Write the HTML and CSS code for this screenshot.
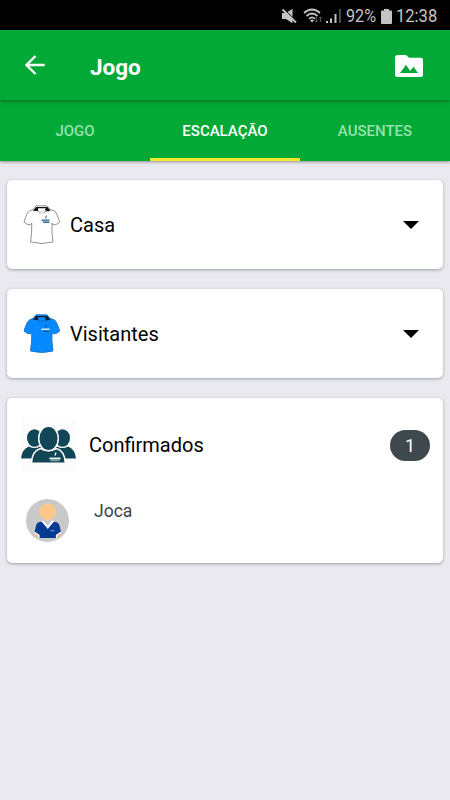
FILE: index.html
```html
<!DOCTYPE html>
<html lang="pt-BR">
<head>
<meta charset="utf-8">
<title>Jogo</title>
<link rel="stylesheet" href="styles.css">
</head>
<body>
<div class="status">
  <svg class="mute" width="16" height="16" viewBox="0 0 16 16"><path d="M1 5h4L11.500.8v14.400L5 11H1z" fill="#c4c4c4"/><path d="M2.500 1L16 14" stroke="#000" stroke-width="1.200"/><path d="M1.500 1.500L15 14.500" stroke="#c4c4c4" stroke-width="1.900"/></svg>
  <svg class="wifi" width="20" height="16" viewBox="0 0 20 16"><g fill="none" stroke="#c4c4c4" stroke-width="1.700"><path d="M1 5Q9 -2 17 5M3.500 8Q9 3 14.500 8M6 10.800Q9 8 12 10.800"/></g><path d="M7 12.300Q9 10.800 11 12.300L9 14.500z" fill="#c4c4c4"/><path d="M13.500 9v5m-1.500-1.500l1.500 1.700 1.500-1.700M17.500 14V9m-1.500 1.500l1.500-1.700L19 10.500" fill="none" stroke="#555"/></svg>
  <svg class="signal" width="16" height="16" viewBox="0 0 16 16"><path d="M0 13h2v2H0zM4 10.500h2V15H4zM8.500 6h2v9h-2z" fill="#c4c4c4"/><path d="M13 1h2v14h-2z" fill="#484848"/></svg>
  <span class="percent">92%</span>
  <svg class="battery" width="11" height="15" viewBox="0 0 11 15"><path d="M3 0h5v1.500h2q1 0 1 1V14q0 1-1 1H1q-1 0-1-1V2.500q0-1 1-1h2z" fill="#c4c4c4"/></svg>
  <span class="clock">12:38</span>
</div>
<header class="bar">
  <svg class="back" width="20" height="20" viewBox="0 0 20 20"><path d="M19.700 10H2M10.500 1L1.500 10l9 9" fill="none" stroke="#fff" stroke-width="2.300"/></svg>
  <h1>Jogo</h1>
  <svg class="folder" width="28" height="23" viewBox="0 0 28 23"><path fill="#fff" fill-rule="evenodd" d="M2.500 0H11l3 2.800h11.500Q28 2.800 28 5.300v14.200q0 2.500-2.500 2.500h-23Q0 22 0 19.500v-17Q0 0 2.500 0zM5 18h18l-4.500-6.300-3.300 4.200L11 9.800z"/></svg>
</header>
<nav class="tabs">
  <div class="tab"><span>JOGO</span></div>
  <div class="tab active"><span>ESCALAÇÃO</span></div>
  <div class="tab"><span>AUSENTES</span></div>
</nav>
<main>
  <section class="card team">
    <svg class="shirt" width="38" height="40" viewBox="0 0 38 40"><path d="M13 .8h11l2.500 3.200 5 2Q33.500 7 36.700 17q-2 2.500-6.500 3l-1.200-2q-.6 9 1 19-11 3-22.500 0 1.500-9 1.300-19l-1.300 2q-4.500-.5-6.500-3Q4 7 6.500 6l4-2z" fill="#fff" stroke="#858585" stroke-width=".9"/><path d="M13.200 2L9.800 5.800l6.200.5 6 .2 5.500-.5L24.500 2z" fill="#111"/><path d="M15 3.300h8L19 8.500l-4-4z" fill="#fff"/><path d="M15 5l1.500 3.500L19 6.500l2 2L23 5" fill="#fff" stroke="#888" stroke-width=".6"/><path d="M23.500 10.500l-1 3" stroke="#555"/><path d="M18.500 15.300h8" stroke="#3f87ab" stroke-width="1.700"/><path d="M20 17.200h6.500" stroke="#17495d" stroke-width="1.200"/></svg>
    <span class="label">Casa</span>
    <svg class="caret" width="16" height="8" viewBox="0 0 16 8"><path d="M0 0h16L8 8z"/></svg>
  </section>
  <section class="card team">
    <svg class="shirt" width="38" height="40" viewBox="0 0 38 40"><path d="M13 .8h11l2.500 3.200 5 2Q33.500 7 36.700 17q-2 2.500-6.500 3l-1.200-2q-.6 9 1 19-11 3-22.500 0 1.500-9 1.300-19l-1.300 2q-4.500-.5-6.500-3Q4 7 6.500 6l4-2z" fill="#078aff" stroke="#1673bb" stroke-width=".9"/><path d="M13.200 2L9.800 5.800l6.200.5 6 .2 5.500-.5L24.500 2z" fill="#071d32"/><path d="M15 3.300h8L19 8.500l-4-4z" fill="#078aff"/><path d="M15 5l1.500 3.500L19 6.500l2 2L23 5" fill="#078aff" stroke="#125b96" stroke-width=".6"/><path d="M23.500 10.500l-1 3" stroke="#064076"/><path d="M18.500 15.300h8" stroke="#d6edff" stroke-width="1.600"/><path d="M20 17.200h6" stroke="#064076"/></svg>
    <span class="label">Visitantes</span>
    <svg class="caret" width="16" height="8" viewBox="0 0 16 8"><path d="M0 0h16L8 8z"/></svg>
  </section>
  <section class="card confirmed">
    <div class="heading">
      <svg class="group" width="55" height="54" viewBox="0 0 55 54"><path d="M0 0h55v54H0z" fill="#fcfcfc"/><g fill="#114657"><ellipse cx="13.500" cy="20" rx="7.500" ry="8.700"/><ellipse cx="41.500" cy="20" rx="7.500" ry="8.700"/><path d="M0 40.500Q1 31 8 28.500q5.500 3 11 0L28 34l8-5.500q5.500 3 11 0 7 2.500 8 12z"/></g><g fill="#114657" stroke="#fcfcfc" stroke-width="1.500"><path d="M10.500 45.300Q10.800 33 19.500 30.500q8 4.500 16 0Q44 33 44.300 45.300z"/><ellipse cx="27.500" cy="20.500" rx="9.800" ry="12.200"/></g><path d="M35 34.500l-1 3" stroke="#fff" stroke-width="1.300"/><path d="M28.500 40.500h11" stroke="#fff" stroke-width="1.800"/><path d="M29.500 42.700h9" stroke="#9eb9c1"/></svg>
      <span class="label">Confirmados</span>
      <span class="badge">1</span>
    </div>
    <div class="person">
      <svg class="avatar" width="43" height="43" viewBox="0 0 43 43"><circle cx="21.500" cy="21.500" r="21.500" fill="#c9c9c9"/><path d="M10 34l4 2-1 3.300q-3-1-4.700-3zM33.500 34l-4 2 1 3.300q3-1 4.700-3z" fill="#f5bd91"/><path d="M15.500 22.700q-4.500.3-5.300 3.300L8.500 33l4.500 3v3h17.500v-3L35 33l-1.700-7q-.8-3-5.300-3.300l-6.200 6z" fill="#063b94"/><path d="M16.500 22l5.300 6.500L27 22" fill="none" stroke="#fff" stroke-width="1.900"/><path d="M8.500 33.300l4.500 3v3M35 33.300l-4.500 3v3" fill="none" stroke="#fff" stroke-width="1.200"/><circle cx="21.700" cy="12.700" r="8.200" fill="#ffc78a"/><path d="M24.500 31.700h4" stroke="#89a9d4"/></svg>
      <span class="name">Joca</span>
    </div>
  </section>
</main>
</body>
</html>
```
FILE: styles.css
```css
* { box-sizing: border-box; }
body {
  margin: 0;
  height: 800px;
  overflow: hidden;
  background: #e9e9ef;
  color: #000;
  font-family: Roboto, "Liberation Sans", sans-serif;
}
svg { display: block; flex: none; }
.status {
  display: flex;
  height: 30px;
  padding: 2px 0 0 281px;
  align-items: center;
  background: #000;
  color: #c4c4c4;
  font-size: 18px;
  line-height: 28px;
  white-space: nowrap;
}
.wifi { margin-left: 6px; }
.signal { margin-left: 3px; }
.percent { width: 30px; margin-left: 4px; transform: scaleX(.9); transform-origin: left; }
.battery { margin-left: 5px; }
.clock { margin-left: 4px; transform: scaleX(.92); transform-origin: left; }
.bar {
  position: relative;
  display: flex;
  height: 70px;
  padding: 0 27px 0 25px;
  align-items: center;
  background: #03a937;
  color: #fff;
  box-shadow: 0 1px 4px rgba(0, 0, 0, .4);
}
h1 {
  margin: 3px 0 0 45px;
  font-size: 22.500px;
  font-weight: 700;
  line-height: 30px;
}
.folder { margin-left: auto; margin-top: 2px; }
.tabs {
  display: grid;
  grid-template-columns: repeat(3, 1fr);
  height: 60.500px;
  margin-bottom: -.5px;
  background: #03a937;
  box-shadow: 0 1px 3px rgba(0, 0, 0, .4);
}
.tab {
  display: flex;
  align-items: center;
  justify-content: center;
  padding-top: 5px;
  color: #93e3ad;
  font-size: 15px;
  font-weight: 500;
  border-bottom: 3px solid transparent;
}
.tab.active { color: #fff; border-color: #f3e72e; }
main {
  display: flex;
  flex-direction: column;
  gap: 20px;
  padding: 20px 7px;
}
.card {
  background: #fff;
  border-radius: 5px;
  box-shadow: 0 1px 3px rgba(60, 70, 80, .45);
}
.team {
  display: flex;
  height: 89px;
  align-items: center;
  padding: 0 24px 0 16px;
}
.label { font-size: 20px; line-height: 26px; }
.team .label { margin-left: 9px; }
.caret { margin-left: auto; margin-top: 1px; }
.confirmed { height: 165px; padding-top: 20px; }
.heading {
  display: flex;
  height: 54px;
  align-items: center;
  padding: 0 13px 0 14px;
}
.heading .label { margin: 0 0 0 13px; }
.badge {
  width: 40px;
  height: 31px;
  margin-left: auto;
  border-radius: 16px;
  background: #3f484d;
  color: #fff;
  font-size: 18px;
  line-height: 32px;
  text-align: center;
}
.person { display: flex; padding: 27px 0 0 19px; }
.name {
  margin: 0 0 0 25px;
  color: #3c4247;
  font-size: 17.500px;
  line-height: 24px;
}
```
